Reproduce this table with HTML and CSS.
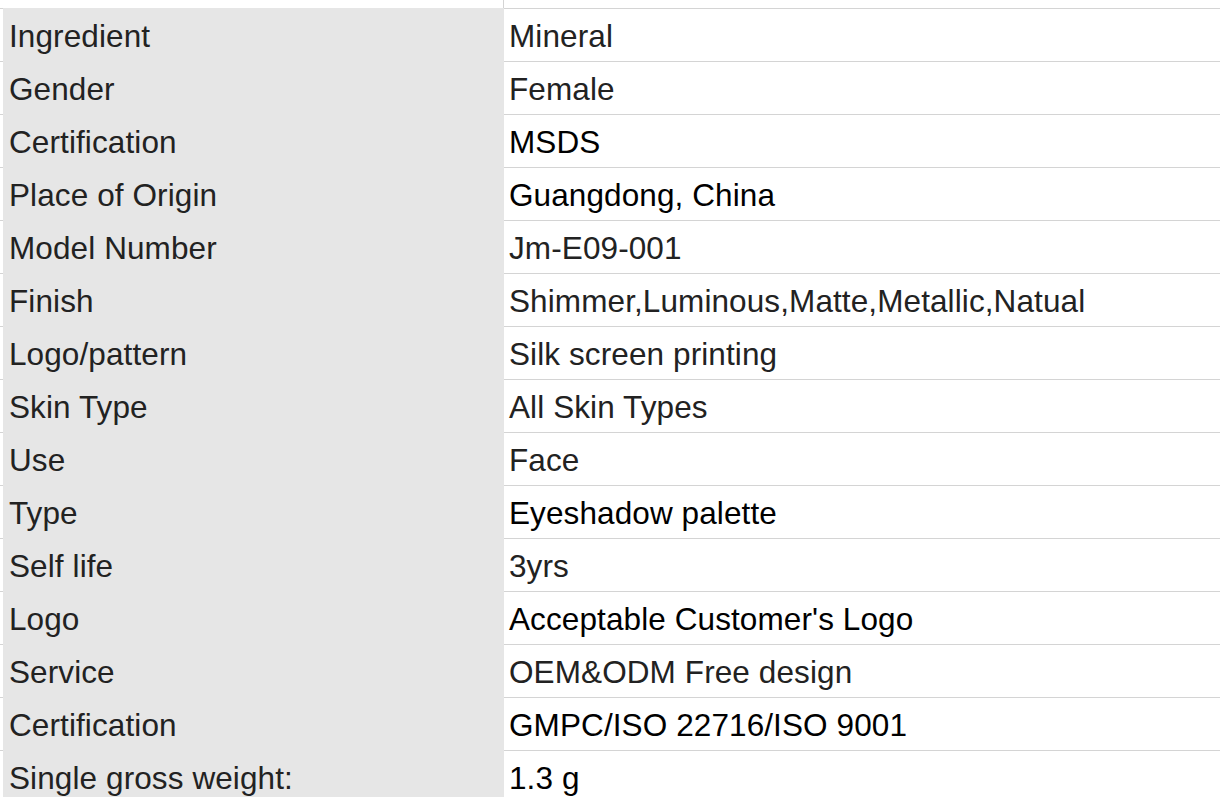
FILE: index.html
```html
<!DOCTYPE html>
<html lang="en">
<head>
<meta charset="utf-8">
<title>Product specifications</title>
<link rel="stylesheet" href="styles.css">
</head>
<body>
<div class="spec">
  <div class="row row-top"><span class="edge"></span><span class="label"></span><span class="value"></span></div>
  <div class="row"><span class="edge"></span><span class="label">Ingredient</span><span class="value">Mineral</span></div>
  <div class="row"><span class="edge"></span><span class="label">Gender</span><span class="value">Female</span></div>
  <div class="row"><span class="edge"></span><span class="label">Certification</span><span class="value dark">MSDS</span></div>
  <div class="row"><span class="edge"></span><span class="label">Place of Origin</span><span class="value dark">Guangdong, China</span></div>
  <div class="row"><span class="edge"></span><span class="label">Model Number</span><span class="value">Jm-E09-001</span></div>
  <div class="row"><span class="edge"></span><span class="label">Finish</span><span class="value">Shimmer,Luminous,Matte,Metallic,Natual</span></div>
  <div class="row"><span class="edge"></span><span class="label">Logo/pattern</span><span class="value">Silk screen printing</span></div>
  <div class="row"><span class="edge"></span><span class="label">Skin Type</span><span class="value">All Skin Types</span></div>
  <div class="row"><span class="edge"></span><span class="label">Use</span><span class="value">Face</span></div>
  <div class="row"><span class="edge"></span><span class="label">Type</span><span class="value dark">Eyeshadow palette</span></div>
  <div class="row"><span class="edge"></span><span class="label">Self life</span><span class="value">3yrs</span></div>
  <div class="row"><span class="edge"></span><span class="label">Logo</span><span class="value dark">Acceptable Customer's Logo</span></div>
  <div class="row"><span class="edge"></span><span class="label">Service</span><span class="value">OEM&amp;ODM Free design</span></div>
  <div class="row"><span class="edge"></span><span class="label">Certification</span><span class="value dark">GMPC/ISO 22716/ISO 9001</span></div>
  <div class="row"><span class="edge"></span><span class="label">Single gross weight:</span><span class="value dark">1.3 g</span></div>
</div>
</body>
</html>
```

FILE: styles.css
```css
html, body {
  margin: 0;
  padding: 0;
  background: #ffffff;
}

body {
  font-family: "Liberation Sans", Arial, sans-serif;
  font-size: 31.5px;
  letter-spacing: 0.1px;
  color: #222222;
  overflow: hidden;
}

.spec {
  display: flex;
  flex-direction: column;
}

.row {
  display: flex;
  height: 53px;
  line-height: 49px;
}

.edge {
  width: 3px;
  flex: none;
  border-top: 1px solid #d4d4d4;
}

.label {
  width: 501px;
  flex: none;
  box-sizing: border-box;
  background: #e6e6e6;
  padding: 4px 0 0 6px;
  white-space: nowrap;
}

.value {
  flex: 1;
  border-top: 1px solid #d4d4d4;
  padding: 3px 0 0 5px;
  white-space: nowrap;
}

.value.dark {
  color: #000000;
}

.row-top {
  height: 8px;
}

.row-top .edge,
.row-top .value {
  border-top: none;
  padding: 0;
}

.row-top .label {
  background: #ffffff;
  border-right: 1px solid #d4d4d4;
  padding: 0;
}
```
